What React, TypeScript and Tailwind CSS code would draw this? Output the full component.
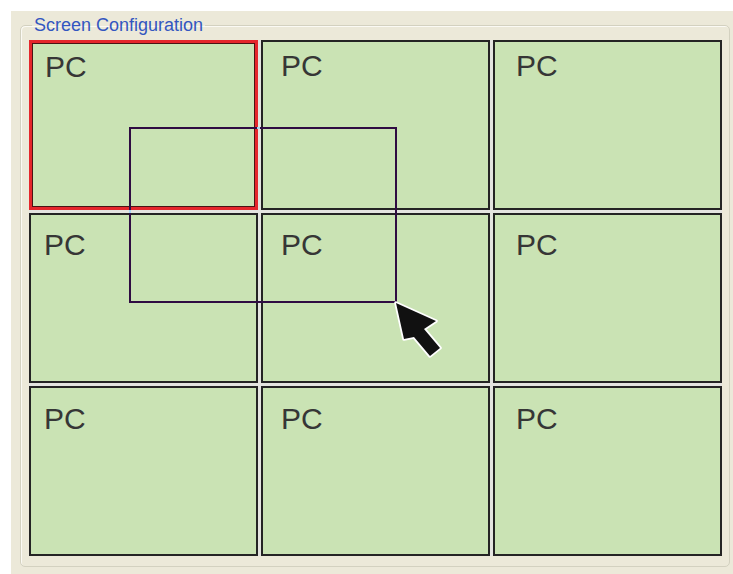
import React, { FC } from "react";

type Cell = { id: number; selected?: boolean };

const cells: Cell[] = [
    { id: 0, selected: true },
    { id: 1 },
    { id: 2 },
    { id: 3 },
    { id: 4 },
    { id: 5 },
    { id: 6 },
    { id: 7 },
    { id: 8 },
];

const colPad = ["pl-[13px]", "pl-[18px]", "pl-[21px]"];
const rowPad = ["pt-[1px]", "pt-[7px]", "pt-[8px]"];

const Cursor: FC = () => (
    <svg
        className="absolute left-[365px] top-[261px]"
        width="50"
        height="60"
        viewBox="-2 -2 50 60"
    >
        <polygon
            points="0,0 40,18 28,26 44,45 34,53 18,34 8,36"
            fill="#111"
            stroke="#fff"
            strokeWidth="3.5"
            strokeLinejoin="round"
            paintOrder="stroke"
        />
    </svg>
);

const App: FC = () => {
    return (
        <div className="w-[733px] h-[574px] bg-white pt-[11px] pl-[11px] font-['Liberation_Sans',Arial,sans-serif]">
            <div className="w-full h-full bg-[#ece9d9] pt-[4px] pl-[9px] pr-[3px] pb-[7px]">
                <fieldset className="flex flex-col h-full rounded-[5px] border border-[#d3d1c0] shadow-[inset_1px_1px_0_#fbfaf4] pt-[5px] pl-[8px] pr-[7px] pb-[10px]">
                    <legend className="ml-[3px] px-[2px] text-[18px] leading-[20px] text-[#3356c0]">
                        Screen Configuration
                    </legend>
                    <div className="relative flex-1 grid grid-cols-3 grid-rows-3 gap-[3px] bg-[#e4e4e0]">
                        {cells.map((cell) => (
                            <div
                                key={cell.id}
                                className={`bg-[#cae3b4] text-[30px] leading-normal text-[#363636] ${colPad[cell.id % 3]} ${rowPad[Math.floor(cell.id / 3)]} ${
                                    cell.selected
                                        ? "border-[3px] border-[#e5262b] shadow-[inset_0_0_0_1px_#4a1414]"
                                        : "border-2 border-[#242424]"
                                }`}
                            >
                                PC
                            </div>
                        ))}

                        {/* drag rectangle */}
                        <div className="absolute left-[100px] top-[87px] w-[268px] h-[176px] border-2 border-[#2f0c42]">
                            <span className="absolute -top-[2px] left-[126px] w-[3px] h-[2px] bg-[#a9d8f2]" />
                            <span className="absolute top-[81px] -left-[2px] w-[2px] h-[3px] bg-[#a9d8f2]" />
                        </div>

                        <Cursor />
                    </div>
                </fieldset>
            </div>
        </div>
    );
};

App.displayName = "App";
export default App;
